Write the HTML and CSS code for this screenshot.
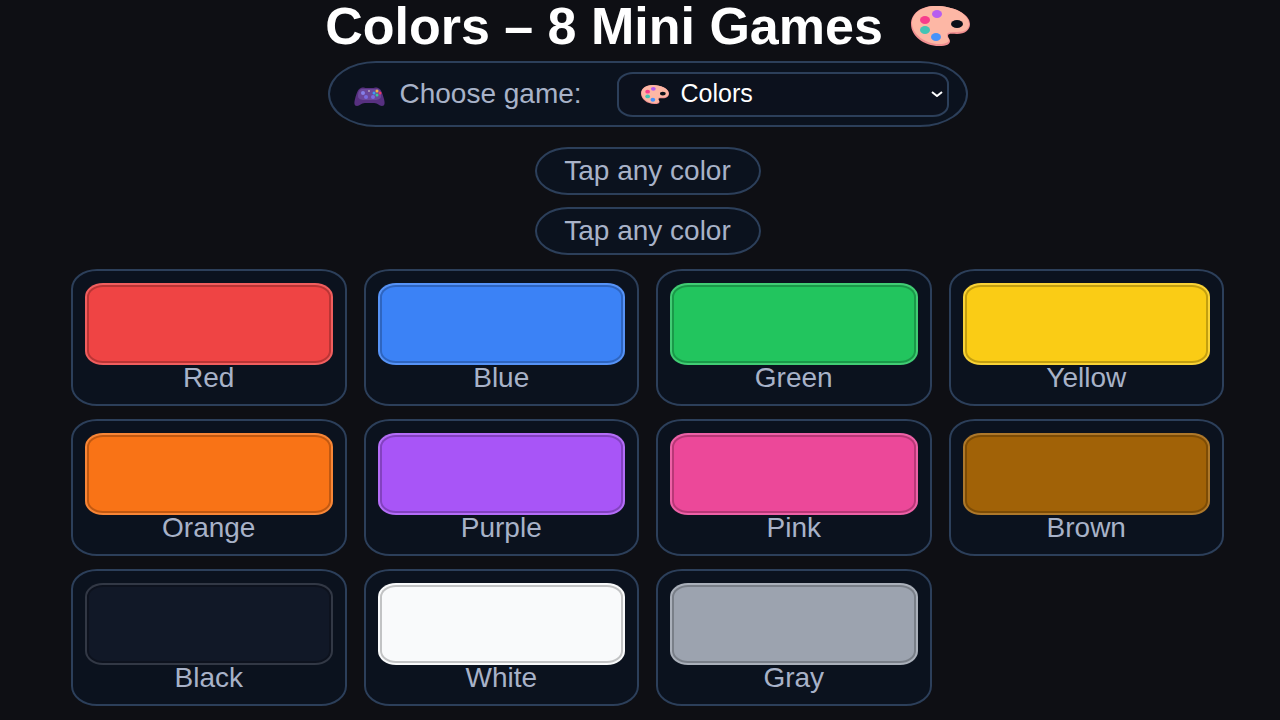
FILE: index.html
```html
<!DOCTYPE html>
<html lang="en">
<head>
    <meta charset="UTF-8">
    <meta name="viewport" content="width=device-width, initial-scale=1.0">
    <title>Colors – 8 Mini Games</title>
    <link rel="stylesheet" href="styles.css">
</head>
<body>
    <svg class="defs" aria-hidden="true">
        <symbol id="palette" viewBox="0 0 59 40" preserveAspectRatio="none">
            <path fill="#f08f91" d="M24 0C9 0 0 8 0 18c0 12 13 22 28 22 8 0 11-2 11-5 0-2-2-3-2-5 0-3 4-2 9-2 8 0 13-4 13-10C59 8 43 0 24 0z"/>
            <path fill="#fdb7a5" d="M25 0C10 0 1 8 1 17c0 11 13 21 27 21 7 0 10-2 10-4 0-2-2-2-2-5 0-3 4-3 10-3 8 0 12-3 12-8C58 8 43 0 25 0z"/>
            <ellipse cx="46" cy="18" rx="6" ry="4" fill="#0b0f18"/>
            <ellipse cx="26" cy="8" rx="5" ry="4" fill="#b65df0"/>
            <ellipse cx="14" cy="14" rx="5" ry="4" fill="#f73d8c"/>
            <ellipse cx="14" cy="24" rx="5" ry="4" fill="#43c4b5"/>
            <ellipse cx="25" cy="31" rx="5" ry="4" fill="#4893fa"/>
        </symbol>
    </svg>

    <header>
        <h1>Colors – 8 Mini Games <svg class="title-icon" aria-hidden="true"><use href="#palette"/></svg></h1>
        <div class="picker">
            <svg class="gamepad" viewBox="0 0 31 19" aria-hidden="true">
                <path fill="#573080" d="M7 1c2-1 4 0 5 0h7c1 0 3-1 5 0 3 1 4 4 6 11 1 4 1 7-2 7-3 0-4-3-8-3h-9c-4 0-5 3-8 3-3 0-3-3-2-7C3 5 4 2 7 1z"/>
                <path fill="#6b479b" d="M8 2h15c3 0 4 4 4 7 0 3-3 4-6 4H10c-3 0-6-1-6-4 0-3 1-7 4-7z"/>
                <circle cx="9" cy="6" r="2" fill="#8580e8"/>
                <circle cx="12" cy="10" r="2" fill="#7a6be0"/>
                <circle cx="19" cy="10" r="2" fill="#7a6be0"/>
                <circle cx="15" cy="4" r="1" fill="#b7a5bd"/>
                <circle cx="23" cy="4" r="1.5" fill="#f5b63d"/>
                <circle cx="26" cy="6" r="1.5" fill="#ee3867"/>
                <circle cx="20" cy="6" r="1.5" fill="#3c9cf0"/>
                <circle cx="23" cy="8" r="1.5" fill="#38c796"/>
            </svg>
            <label for="game">Choose game:</label>
            <div class="select-wrap">
                <select id="game">
                    <option selected>Colors</option>
                </select>
                <svg class="select-icon" aria-hidden="true"><use href="#palette"/></svg>
                <svg class="chevron" viewBox="0 0 12 6" aria-hidden="true"><path d="M1 1l5 4 5-4" fill="none" stroke="#fff" stroke-width="2"/></svg>
            </div>
        </div>
        <p class="pill">Tap any color</p>
        <p class="pill">Tap any color</p>
    </header>

    <main class="grid">
        <button class="card"><span class="swatch red"></span>Red</button>
        <button class="card"><span class="swatch blue"></span>Blue</button>
        <button class="card"><span class="swatch green"></span>Green</button>
        <button class="card"><span class="swatch yellow"></span>Yellow</button>
        <button class="card"><span class="swatch orange"></span>Orange</button>
        <button class="card"><span class="swatch purple"></span>Purple</button>
        <button class="card"><span class="swatch pink"></span>Pink</button>
        <button class="card"><span class="swatch brown"></span>Brown</button>
        <button class="card"><span class="swatch black"></span>Black</button>
        <button class="card"><span class="swatch white"></span>White</button>
        <button class="card"><span class="swatch gray"></span>Gray</button>
    </main>
</body>
</html>
```
FILE: styles.css
```css
* { box-sizing: border-box; }
body {
    margin: 0;
    padding: 0 56px 15px 71px;
    background: #0e0f14;
    color: #a8b2c8;
    font-family: Arial, "Liberation Sans", sans-serif;
    font-size: 28px;
}
.defs { position: absolute; width: 0; height: 0; }
header {
    display: flex;
    flex-direction: column;
    align-items: center;
}
h1 {
    display: flex;
    align-items: center;
    gap: 28px;
    margin: 0 0 9px;
    color: #fff;
    font-size: 52px;
    line-height: 52px;
}
.title-icon { width: 59px; height: 40px; }
.picker {
    display: flex;
    align-items: center;
    width: 640px;
    max-width: 100%;
    height: 66px;
    margin-bottom: 20px;
    padding: 0 17px 0 24px;
    background: #0b121e;
    border: 2px solid #2c3f5a;
    border-radius: 48px / 33px;
}
.gamepad { width: 31px; height: 19px; margin: 4px 15px 0 0; }
.picker label { flex: 1; }
.select-wrap { position: relative; }
select {
    appearance: none;
    width: 332px;
    height: 45px;
    padding: 0 32px 2px 62px;
    background: #0c111d;
    border: 2px solid #2c3f5a;
    border-radius: 16px / 12px;
    color: #fff;
    font: 25px Arial, "Liberation Sans", sans-serif;
}
.select-icon, .chevron { position: absolute; pointer-events: none; }
.select-icon { left: 24px; top: 13px; width: 28px; height: 19px; }
.chevron { right: 6px; top: 19px; width: 12px; height: 6px; }
.pill {
    min-width: 226px;
    height: 48px;
    margin: 0 0 12px;
    background: #0b121e;
    border: 2px solid #2c3f5a;
    border-radius: 33px / 24px;
    line-height: 44px;
    text-align: center;
}
.grid {
    display: grid;
    grid-template-columns: repeat(4, 1fr);
    gap: 13px 17px;
    margin-top: 2px;
}
.card {
    height: 137px;
    padding: 12px 12px 0;
    background: #0b121e;
    border: 2px solid #2c3f5a;
    border-radius: 26px / 20px;
    color: inherit;
    font: inherit;
    line-height: 26px;
    text-align: center;
    display: flex;
    flex-direction: column;
    align-items: center;
    cursor: pointer;
}
.swatch {
    width: 100%;
    height: 82px;
    border: 2px solid rgba(255, 255, 255, 0.14);
    border-radius: 18px / 14px;
    box-shadow: inset 0 0 0 2px rgba(0, 0, 0, 0.22);
}
.red { background: #ef4444; }
.blue { background: #3b82f6; }
.green { background: #22c55e; }
.yellow { background: #facc15; }
.orange { background: #f97316; }
.purple { background: #a855f7; }
.pink { background: #ec4899; }
.brown { background: #a16207; }
.black { background: #111827; }
.white { background: #f9fafb; }
.gray { background: #9ca3af; }
```
